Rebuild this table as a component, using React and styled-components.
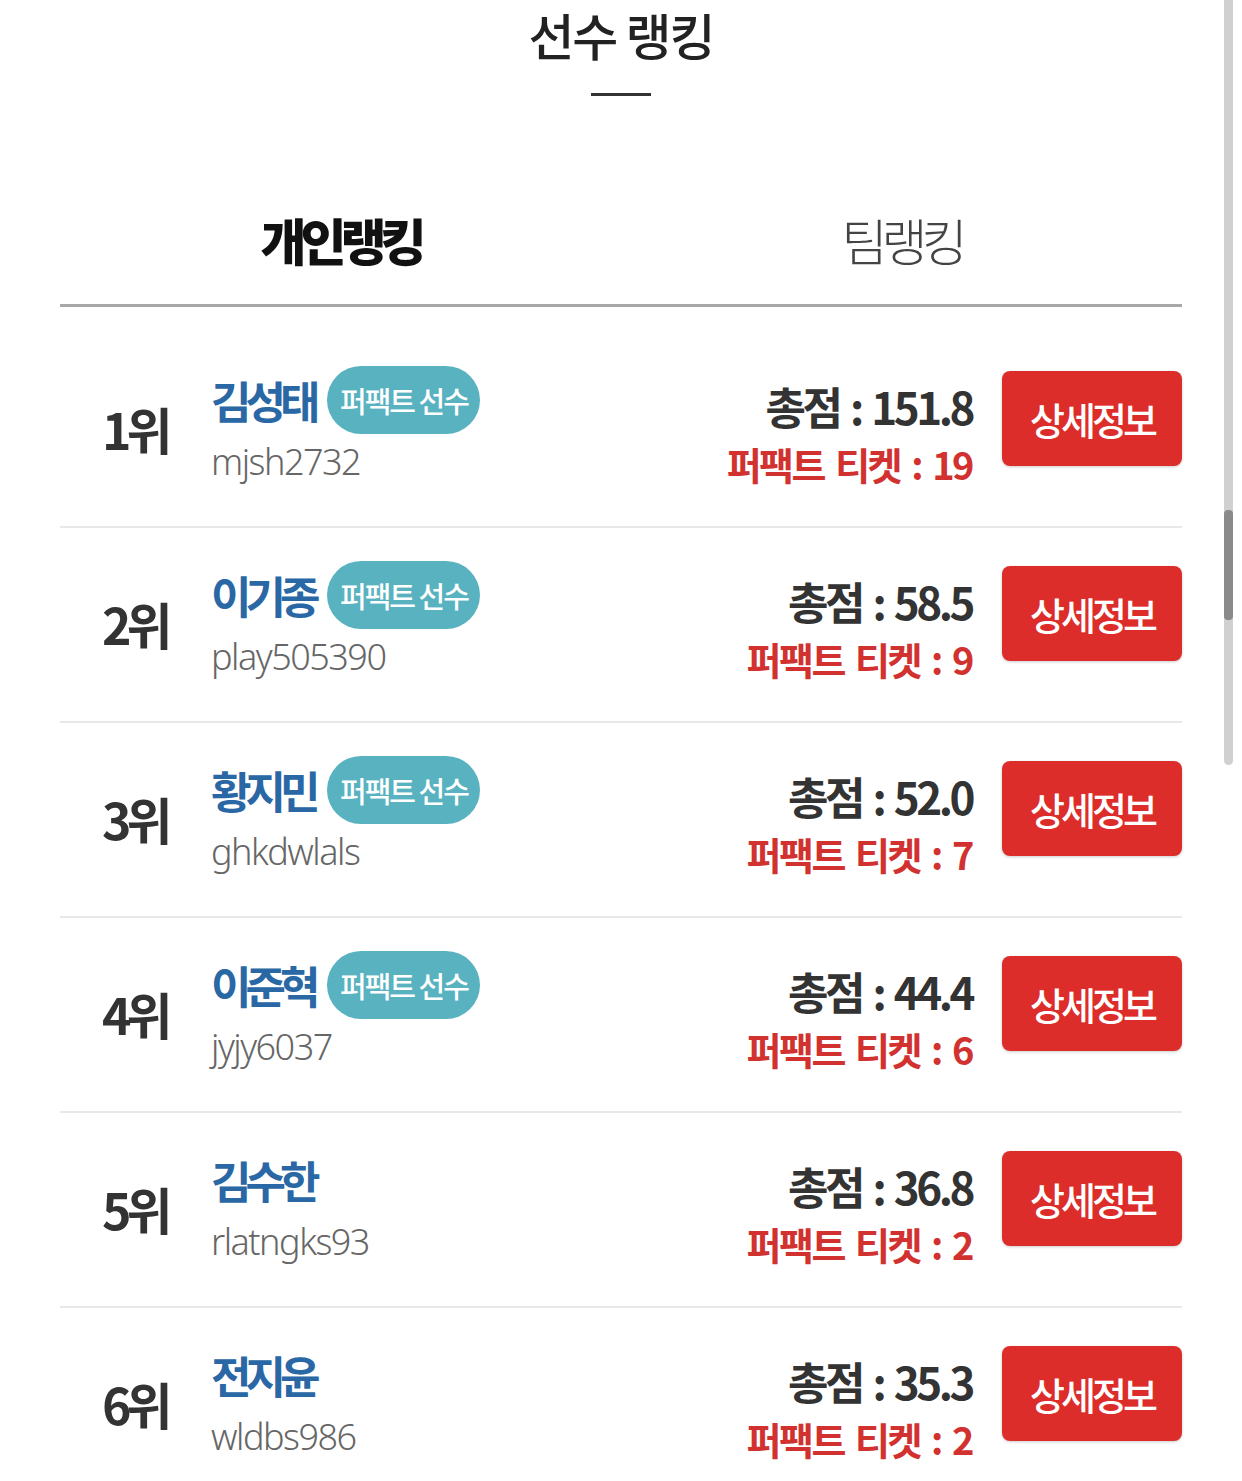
import styled, { createGlobalStyle } from "styled-components";

const players = [
  { rank: 1, name: "김성태", id: "mjsh2732", score: "151.8", tickets: 19, perfect: true },
  { rank: 2, name: "이기종", id: "play505390", score: "58.5", tickets: 9, perfect: true },
  { rank: 3, name: "황지민", id: "ghkdwlals", score: "52.0", tickets: 7, perfect: true },
  { rank: 4, name: "이준혁", id: "jyjy6037", score: "44.4", tickets: 6, perfect: true },
  { rank: 5, name: "김수한", id: "rlatngks93", score: "36.8", tickets: 2, perfect: false },
  { rank: 6, name: "전지윤", id: "wldbs986", score: "35.3", tickets: 2, perfect: false },
];

const GlobalStyle = createGlobalStyle`
  html, body {
    margin: 0;
    padding: 0;
    background: #fff;
    overflow: hidden;
  }
  body {
    font-family: "Noto Sans CJK KR", "Noto Sans", sans-serif;
    color: #333;
  }
`;

export default function App() {
  return (
    <>
      <GlobalStyle />
      <Page>
        <Header>
          <Title>선수 랭킹</Title>
          <TitleBar />
        </Header>
        <Tabs>
          <Tab active>개인랭킹</Tab>
          <Tab>팀랭킹</Tab>
        </Tabs>
        <List>
          {players.map((p) => (
            <Row key={p.rank}>
              <Rank>{p.rank}위</Rank>
              <Info>
                <NameLine>
                  <Name>{p.name}</Name>
                  {p.perfect && <Badge>퍼팩트 선수</Badge>}
                </NameLine>
                <UserId>{p.id}</UserId>
              </Info>
              <Scores>
                <Total>총점 : {p.score}</Total>
                <Tickets>퍼팩트 티켓 : {p.tickets}</Tickets>
              </Scores>
              <DetailButton>상세정보</DetailButton>
            </Row>
          ))}
        </List>
      </Page>
      <ScrollTrack>
        <ScrollThumb />
      </ScrollTrack>
    </>
  );
}

const Page = styled.div`
  width: 1122px;
  margin-left: 60px;
`;

const Header = styled.header`
  display: flex;
  flex-direction: column;
  align-items: center;
  padding-top: 4px;
`;

const Title = styled.h1`
  margin: 0;
  padding: 0 6px;
  font-size: 50px;
  line-height: 60px;
  font-weight: 500;
  letter-spacing: -2px;
  color: #222;
`;

const TitleBar = styled.div`
  width: 60px;
  height: 3px;
  background: #333;
  margin-top: 29px;
`;

const Tabs = styled.div`
  display: grid;
  grid-template-columns: 1fr 1fr;
  margin-top: 108px;
  border-bottom: 3px solid #a8a8a8;
`;

const Tab = styled.div`
  text-align: center;
  font-size: 50px;
  line-height: 70px;
  padding-bottom: 30px;
  letter-spacing: -6px;
  font-weight: ${(props) => (props.active ? 900 : 300)};
  color: ${(props) => (props.active ? "#111" : "#444")};
`;

const List = styled.div`
  padding-top: 26px;
`;

const Row = styled.div`
  display: flex;
  align-items: center;
  height: 195px;
  box-sizing: border-box;
  padding-bottom: 14px;
  border-bottom: 2px solid #e8e8e8;
`;

const Rank = styled.div`
  width: 151px;
  box-sizing: border-box;
  padding: 10px 0 0 42px;
  font-size: 50px;
  font-weight: 700;
  letter-spacing: -5px;
  color: #333;
`;

const Info = styled.div`
  display: flex;
  flex-direction: column;
  flex: 1;
  padding-top: 5px;
`;

const NameLine = styled.div`
  display: flex;
  align-items: center;
  gap: 13px;
  height: 68px;
`;

const Name = styled.span`
  font-size: 44px;
  font-weight: 700;
  letter-spacing: -6px;
  color: #2a68a5;
`;

const Badge = styled.span`
  display: inline-flex;
  align-items: center;
  justify-content: center;
  width: 153px;
  height: 68px;
  border-radius: 34px;
  background: #58b2c0;
  color: #fff;
  font-size: 29px;
  font-weight: 500;
  letter-spacing: -2px;
`;

const UserId = styled.span`
  margin-top: 5px;
  font-family: "Noto Sans", sans-serif;
  font-size: 36px;
  line-height: 46px;
  font-weight: 300;
  letter-spacing: -1.5px;
  color: #666;
`;

const Scores = styled.div`
  display: flex;
  flex-direction: column;
  align-items: flex-end;
  margin-right: 30px;
  padding-top: 21px;
`;

const Total = styled.span`
  font-size: 44px;
  line-height: 56px;
  font-weight: 700;
  letter-spacing: -3.5px;
  word-spacing: 4px;
  color: #333;
`;

const Tickets = styled.span`
  margin-top: 5px;
  font-size: 38px;
  line-height: 50px;
  font-weight: 700;
  letter-spacing: -2.5px;
  word-spacing: 5px;
  color: #d13230;
`;

const DetailButton = styled.button`
  width: 180px;
  height: 95px;
  margin-bottom: 8px;
  border: none;
  border-radius: 8px;
  background: #dd2d2a;
  box-shadow: 0 1px 3px rgba(0, 0, 0, 0.2);
  color: #fff;
  font-family: "Noto Sans CJK KR", sans-serif;
  font-size: 38px;
  font-weight: 500;
  letter-spacing: -4px;
  cursor: pointer;
`;

const ScrollTrack = styled.div`
  position: fixed;
  top: 0;
  left: 1224px;
  width: 9px;
  height: 765px;
  border-radius: 0 0 5px 5px;
  background: #d0d0d0;
`;

const ScrollThumb = styled.div`
  position: absolute;
  top: 510px;
  left: 0;
  width: 9px;
  height: 110px;
  border-radius: 4px;
  background: #8a8a8a;
`;
